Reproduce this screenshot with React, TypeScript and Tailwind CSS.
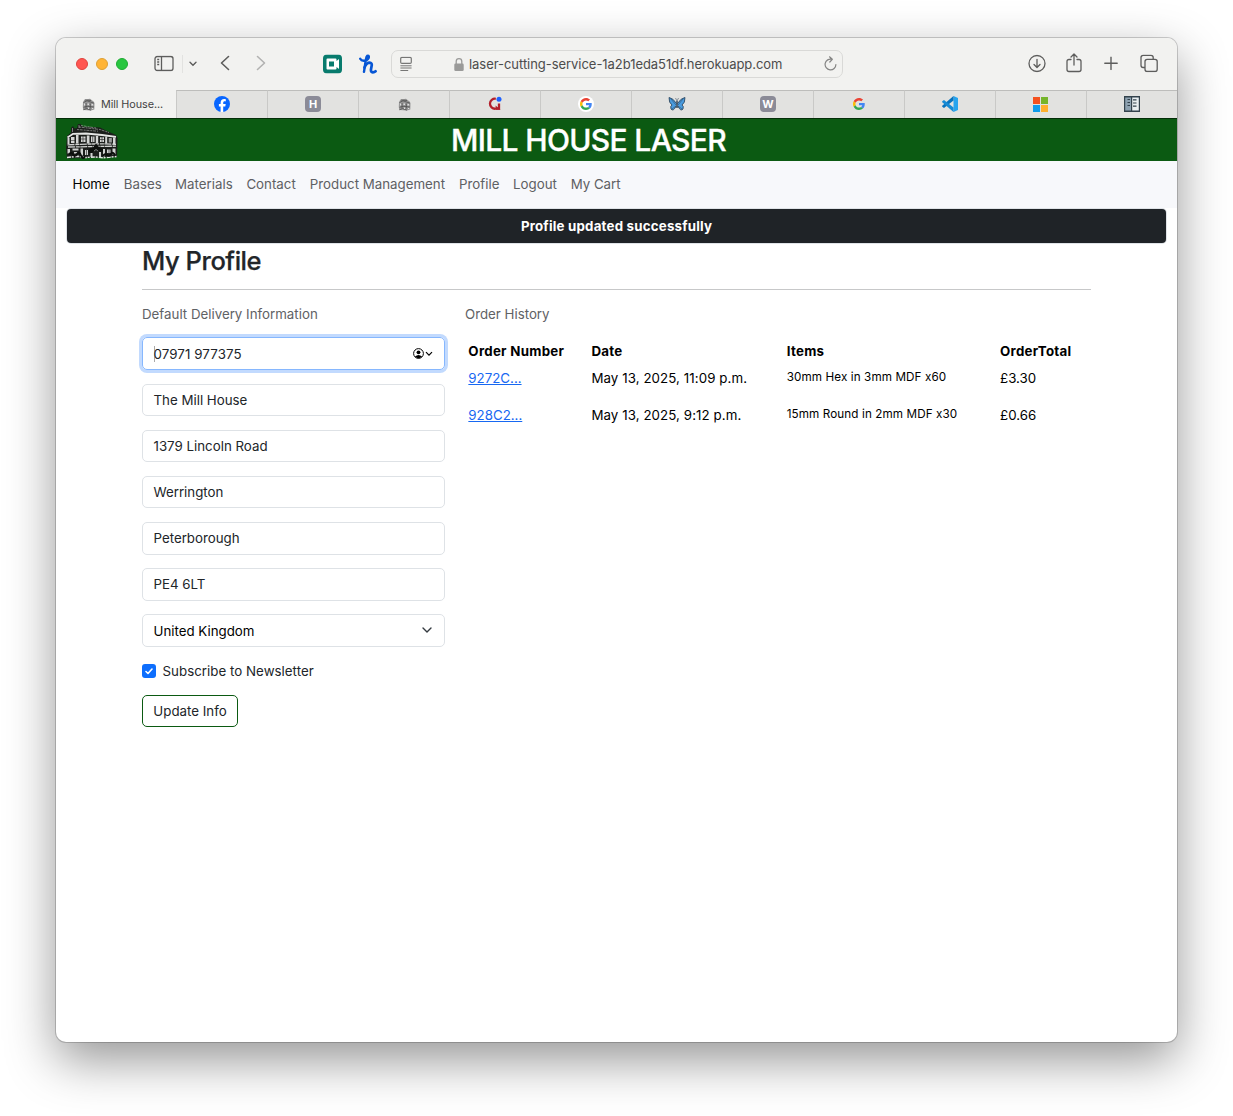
import React from "react";

function House({ className }: { className: string }) {
  const light = "#e4e6e4";
  return (
    <svg viewBox="0 0 52 36" className={className} preserveAspectRatio="none">
      <path d="M1 13 5 9.500 5 5 7 3 8.500 5.500 11 5 12 1 14.500 1 17 3.500 34 4.500 41 8 50 12 51.500 15 51 34 1 35.500 0 25Z" fill="#1b1e1b" />
      <path d="M13 4 34 6.500 43 9.500M11 6.500 32 8.200M15 2.500 30 5" stroke={light} strokeWidth="1" strokeDasharray="2 .7 3 1" opacity=".45" fill="none" />
      <path d="M6.500 5v4M13 2v3" stroke={light} strokeWidth=".8" opacity=".6" />
      <path d="M1.500 14.500 7 10.800 20 10.500 36 12 50 13.800" stroke={light} strokeWidth="1.800" fill="none" />
      <path d="M1.500 21.800 14 21.300 34 20.800 50 21.300M2 24 25 23.600 50 23.200" stroke={light} strokeWidth="1.300" strokeDasharray="7 .8 4 .5" opacity=".9" fill="none" />
      <g fill={light}>
        <path d="M1.500 15h2v6h-2zM5 14h3.500v3H5zM5 17.500h3.500v2.500H5zM10 12h2.500v8.500H10zM15 13.500h4.500v5.500H15zM20.800 12.500h2.700v8h-2.700zM25 13.500h3.500v5.500H25zM29.800 13h2.400v7h-2.400zM34 14.200h4v4.800h-4zM39.200 13.500h2v7h-2zM42.800 15h2.800v4.500h-2.800zM47 14.500h2.500v7H47z" opacity=".92" />
        <path d="M1.500 26h2.500v4.500H1.500zM6.500 25.500h6v2h-6zM8 29h4v1.500H8zM14.500 25.500h2.500v7h-2.500zM19 27h3v5h-3zM24.500 30h2v4h-2zM33 29h2v5h-2zM37 26h2v7.500h-2zM41 26.500h3.500v3.500H41zM46.500 25.500h3v6h-3z" opacity=".9" />
      </g>
      <path d="M17 13v7M15 16h5M36 14v5M33.500 16.500H38M26.700 13v7M44 14v6M20.500 26v6M43 26v5" stroke="#333" strokeWidth=".7" />
      <path d="M22 28 24 25 27 24.500 30 20.500 33 24 37 26 37 28.500 34 28.500 30 25.500 26 30 23 30Z" fill="#0c0f0c" />
      <path d="M28 28 30 26.500 32 28" stroke={light} strokeWidth=".8" fill="none" opacity=".6" />
      <path d="M1 34.500 12 33.300 20 34.500 29 34 38 34.800 50.500 33.500" stroke={light} strokeWidth="1.400" strokeDasharray="4 .8 2 1.200" fill="none" />
      <path d="M3 31.500q2-3 4 0t4-.5 4 1.500 4 .5M37 33q2-3 4-1t4-1 4 1.500" stroke="#0c0f0c" strokeWidth="2" fill="none" />
    </svg>
  );
}

function MiniHouse() {
  return (
    <svg viewBox="0 0 13 13" className="h-[13px] w-[13px]">
      <path d="M1 4 2.500 1.500 8 .8 11.500 3.500 12.500 5 12.300 11.500 9 12.500 1.200 12 .8 9Z" fill="#979797" />
      <path d="M1.500 4.500 5 2.800 12 5.200M3 2 9 2.500M1.500 9.300 5 8.300 12 9M4 5v5M8.300 5.500v5M1.500 11.800l3-1.300 4.500 1.700" stroke="#505050" strokeWidth=".8" fill="none" />
      <path d="M2 5.500h1.200v2H2zM5.500 5.500h1.500v1.500H5.500zM9.500 6h1.500v1.500H9.500zM6 9.500h1v1.500H6zM10 10h1.200v1H10zM3 3.200l2-.4" fill="#dedede" />
    </svg>
  );
}

function GoogleG({ className }: { className: string }) {
  return (
    <svg viewBox="0 0 48 48" className={className}>
      <path fill="#EA4335" d="M24 9.500c3.540 0 6.710 1.220 9.210 3.600l6.850-6.850C35.900 2.380 30.470 0 24 0 14.620 0 6.510 5.380 2.560 13.220l7.980 6.190C12.430 13.720 17.740 9.500 24 9.500z" />
      <path fill="#4285F4" d="M46.980 24.550c0-1.570-.15-3.090-.38-4.550H24v9.020h12.940c-.58 2.960-2.260 5.480-4.780 7.180l7.730 6c4.510-4.180 7.090-10.360 7.090-17.650z" />
      <path fill="#FBBC05" d="M10.530 28.590c-.48-1.450-.76-2.990-.76-4.590s.27-3.140.76-4.590l-7.980-6.190C.92 16.460 0 20.120 0 24s.92 7.540 2.560 10.780l7.970-6.190z" />
      <path fill="#34A853" d="M24 48c6.480 0 11.930-2.130 15.890-5.810l-7.730-6c-2.150 1.450-4.920 2.300-8.160 2.300-6.260 0-11.570-4.220-13.470-9.910l-7.980 6.190C6.510 42.620 14.620 48 24 48z" />
    </svg>
  );
}

function LetterIcon({ children }: { children: string }) {
  return <span className="flex h-4 w-4 items-center justify-center rounded-[4px] bg-[#8b8b97] pt-px text-[11px] leading-none font-bold text-white">{children}</span>;
}

const favicons = [
  <svg viewBox="0 0 16 16" className="h-4 w-4">
    <circle cx="8" cy="8" r="8" fill="#0866ff" />
    <path d="M6.600 15.900V10.500H4.900V8h1.700V6.900c0-2.700 1.200-3.900 3.700-3.900.5 0 1.100.1 1.500.2v2.200c-.2 0-.6-.1-1-.1-1.200 0-1.600.5-1.600 1.600V8h2.500l-.4 2.500H9.200v5.400z" fill="#fff" />
  </svg>,
  <LetterIcon>H</LetterIcon>,
  <MiniHouse />,
  <svg viewBox="0 0 16 16" className="h-4 w-4">
    <path d="M8.800 2.800A5 5 0 1 0 8.500 12.700H12V7.500" fill="none" stroke="#b3202c" strokeWidth="2.300" />
    <path d="M8.500 9.500 13.600 13.800H9z" fill="#b3202c" />
    <circle cx="12" cy="3.300" r="2.500" fill="#1f62ff" />
  </svg>,
  <span className="flex h-4 w-4 items-center justify-center rounded-full bg-white"><GoogleG className="h-3 w-3" /></span>,
  <svg viewBox="0 0 18 16" className="h-4 w-[18px]" stroke="#2b3f52" strokeWidth=".8" fill="#4a9ce0">
    <path d="M8.500 7.500Q5 2 1 1.500 0.800 7 4 9 2 10 3 13 5 16 8.300 10M9.500 7.500Q13 2 17 1.500 17.200 7 14 9 16 10 15 13 13 16 9.700 10" />
    <path d="M9 5v7" strokeWidth="1.400" />
    <path d="M9 5 7.500 2M9 5l1.500-3M3 3l5 6M15 3l-5 6M8 10l-4 3M10 10l4 3" strokeWidth=".5" />
  </svg>,
  <LetterIcon>W</LetterIcon>,
  <GoogleG className="h-3 w-3" />,
  <svg viewBox="0 0 16 16" className="h-4 w-4">
    <path d="M11.500 0 16 2v12l-4.500 2z" fill="#27a4ee" />
    <path d="M11.500 0v4.600L2 12 .2 10.700v-1z" fill="#0873bd" />
    <path d="M11.500 16v-4.600L2 4 .2 5.300v1z" fill="#168bd5" />
  </svg>,
  <span className="mr-px grid h-[15px] w-[15px] grid-cols-2 gap-px">
    <i className="bg-[#f4511e]" /><i className="bg-[#76b52b]" /><i className="bg-[#119bea]" /><i className="bg-[#ffb02e]" />
  </span>,
  <svg viewBox="0 0 16 16" className="h-4 w-4">
    <path d="M0 0h16v16H0z" fill="#33424c" />
    <path d="M1.200 1.500h5.800v13H1.200z" fill="#8da1b0" />
    <path d="M8.200 1.500h6.600v13H8.200z" fill="#e8eef1" />
    <path d="M3.500 3.500h2.500M3.500 6.500h2.500M3.500 9.500h2.500M9 3.800h3.500M9 7h3.500M9 10.200h3.500" stroke="#33424c" strokeWidth="1.200" />
  </svg>,
];

const navItems: [string, string][] = [
  ["Home", "w-[51.300px] text-black"],
  ["Bases", "w-[51.300px]"],
  ["Materials", "w-[71.300px]"],
  ["Contact", "w-[63.400px]"],
  ["Product Management", "w-[149.300px]"],
  ["Profile", "w-[54px]"],
  ["Logout", "w-[57.700px]"],
  ["My Cart", "w-[60px] tracking-[-0.050px]"],
];

function Toolbar() {
  return (
    <div className="flex h-[52px] shrink-0 items-center bg-[#f2f2f0] text-[#5d5d5c]">
      <div className="ml-5 flex gap-2">
        <span className="h-3 w-3 rounded-full border border-[#e0443e] bg-[#ff5651]" />
        <span className="h-3 w-3 rounded-full border border-[#dea034] bg-[#ffb436]" />
        <span className="h-3 w-3 rounded-full border border-[#1eab33] bg-[#28c640]" />
      </div>
      <svg viewBox="0 0 20 16" className="ml-[25.500px] h-4 w-5 -translate-y-[0.500px]" fill="none" stroke="currentColor" strokeWidth="1.300">
        <rect x="1" y="1" width="18" height="14" rx="2.200" />
        <path d="M7.500 1v14M3.200 4h2M3.200 6.500h2M3.200 9h2" />
      </svg>
      <span className="ml-2 h-[18px] w-px bg-[#e2e2e0]" />
      <svg viewBox="0 0 8 6" className="ml-[6.500px] h-[6px] w-2" fill="none" stroke="currentColor" strokeWidth="1.400" strokeLinecap="round"><path d="M1 1.200 4 4.200 7 1.200" /></svg>
      <svg viewBox="0 0 10 16" className="ml-[23px] h-4 w-[10px] -translate-y-[1px]" fill="none" stroke="currentColor" strokeWidth="1.600" strokeLinecap="round" strokeLinejoin="round"><path d="M8.500 1.500 1.500 8l7 6.500" /></svg>
      <svg viewBox="0 0 10 16" className="ml-[26px] h-4 w-[10px] -translate-y-[1px] text-[#b2b2b1]" fill="none" stroke="currentColor" strokeWidth="1.600" strokeLinecap="round" strokeLinejoin="round"><path d="M1.500 1.500 8.500 8 1.500 14.500" /></svg>
      <svg viewBox="0 0 19 19" className="ml-[57px] h-[19px] w-[19px] -translate-y-[0.500px]">
        <rect width="19" height="19" rx="4" fill="#087b6d" />
        <path d="M4.500 4h8q1 0 1 1v1.500l2.500-2v10l-2.500-2V14q0 1-1 1h-8q-1 0-1-1V5q0-1 1-1z" fill="#fff" />
        <path d="M6 7h5v5H6z" fill="#087b6d" />
      </svg>
      <svg viewBox="0 0 18 20" className="ml-[17px] h-5 w-[18px]" fill="none" stroke="#0756d5" strokeLinecap="round" strokeLinejoin="round">
        <path d="M1.200 4.800Q2.500 7.300 6.200 6.600 9.800 5.500 9.900 3 9.600 1.200 8.300 1.800 7.300 2.600 6.800 6L5 17.800" strokeWidth="2.400" />
        <path d="M5.500 13.500Q7.500 8.600 10.600 8.600 13.200 8.800 12.700 11.500L12 15.200Q11.600 18.200 13.800 18.300 15.600 18.200 16.600 17.300" strokeWidth="2.700" />
      </svg>
      <div className="ml-[14px] flex h-7 w-[452px] items-center rounded-[7px] border border-[#d9d9d7] text-[#767675]">
        <svg viewBox="0 0 12 15" className="ml-2 h-[15px] w-3 -translate-y-[0.500px]" fill="none" stroke="currentColor" strokeWidth="1.200" strokeLinecap="round"><rect x=".7" y=".9" width="10.600" height="6" rx="1.200" /><path d="M.8 9.300h10.400M.8 11.500h10.400M.8 14h7" strokeWidth="1" /></svg>
        <svg viewBox="0 0 10 13" className="ml-[41.500px] h-[13px] w-[10px]" fill="none"><rect x=".3" y="5.500" width="9.400" height="7.500" rx="1.300" fill="#9a9a99" /><path d="M2.200 6V3.500a2.800 2.800 0 0 1 5.600 0V6" stroke="#9a9a99" strokeWidth="1.300" /></svg>
        <span className="ml-[5.500px] w-[314px] pt-px text-[13px] tracking-[-0.045px] whitespace-nowrap text-[#4c4c4c]">laser-cutting-service-1a2b1eda51df.herokuapp.com</span>
        <svg viewBox="0 0 13 15" className="ml-[41px] h-[15px] w-[13px] -translate-y-px" fill="none" stroke="#858584" strokeWidth="1.200" strokeLinecap="round" strokeLinejoin="round"><path d="M8 3.300A5.400 5.400 0 1 0 11.900 8.500M5.500.8 8.300 3.300 5.800 6" /></svg>
      </div>
      <div className="ml-[185px] flex h-5 items-center">
        <svg viewBox="0 0 18 18" className="h-[18px] w-[18px] -translate-y-[0.500px]" fill="none" stroke="currentColor" strokeWidth="1.300" strokeLinecap="round" strokeLinejoin="round"><circle cx="9" cy="9" r="8" /><path d="M9 4.800v8M6 10l3 3 3-3" /></svg>
        <svg viewBox="0 0 16 20" className="ml-5 h-5 w-4 -translate-y-px" fill="none" stroke="currentColor" strokeWidth="1.300" strokeLinecap="round" strokeLinejoin="round"><path d="M5 6.500H3Q1 6.500 1 8.500v8q0 2 2 2h10q2 0 2-2v-8q0-2-2-2h-2M8 12V1.200M5 4l3-3 3 3" /></svg>
        <svg viewBox="0 0 14 14" className="ml-[21.500px] h-[14px] w-[14px] -translate-y-[0.700px]" fill="none" stroke="currentColor" strokeWidth="1.400" strokeLinecap="round"><path d="M7 .8v12.400M.8 7h12.400" /></svg>
        <svg viewBox="0 0 18 18" className="ml-[22px] h-[18px] w-[18px] -translate-y-[0.700px]" fill="none" stroke="currentColor" strokeWidth="1.300" strokeLinejoin="round"><rect x="5" y="5" width="12.200" height="12.200" rx="2.200" /><path d="M5 13.200H3.200Q1 13.200 1 11V3.200Q1 1 3.200 1H11q2.200 0 2.200 2.200V5" /></svg>
      </div>
    </div>
  );
}

function TabStrip() {
  return (
    <div className="flex h-7 shrink-0">
      <div className="flex w-[120px] items-center bg-[#f2f2f0] pl-[26px]">
        <MiniHouse />
        <span className="ml-[6px] pt-[2px] text-[10.800px] tracking-[-0.060px] whitespace-nowrap text-[#434343]">Mill House...</span>
      </div>
      {favicons.map((icon, i) => (
        <div key={i} className="flex w-[91px] items-center justify-center border-t border-l border-t-[#bdbdbb] border-l-[#c9c9c7] bg-[#e2e2e0] pb-px">{icon}</div>
      ))}
    </div>
  );
}

const fields = ["The Mill House", "1379 Lincoln Road", "Werrington", "Peterborough", "PE4 6LT"];

const orders = [
  ["9272C...", "May 13, 2025, 11:09 p.m.", "30mm Hex in 3mm MDF x60", "£3.30"],
  ["928C2...", "May 13, 2025, 9:12 p.m.", "15mm Round in 2mm MDF x30", "£0.66"],
];

function DeliveryForm() {
  return (
    <section className="w-[303px]">
      <h2 className="h-5 leading-5 text-[#5f6265]">Default Delivery Information</h2>
      <div className="mt-[13px] flex h-[33px] items-center rounded-[5px] border border-[#86b7fe] pl-[10.500px] shadow-[0_0_0_3px_#c2dafe]">
        <span className="-mr-px h-4 w-px bg-[#aaa]" />
        <span className="pt-[2px] tracking-[0.100px]">07971 977375</span>
        <svg viewBox="0 0 11 11" className="ml-auto h-[11px] w-[11px]"><circle cx="5.500" cy="5.500" r="4.900" fill="none" stroke="#000" /><circle cx="5.500" cy="4.300" r="1.900" /><path d="M2 8.500Q5.500 5.500 9 8.500 5.500 12 2 8.500" /></svg>
        <svg viewBox="0 0 8 6" className="mr-[11px] ml-px h-[6px] w-2" fill="none" stroke="#000" strokeWidth="1.200"><path d="M1 1.200 4 4.200 7 1.200" /></svg>
      </div>
      <div className="mt-[13.500px] flex flex-col gap-[13.300px]">
        {fields.map((f) => (
          <div key={f} className="flex h-[32.800px] items-center rounded-[5px] border border-[#dee2e6] pt-[1.400px] pl-[10.500px]">{f}</div>
        ))}
        <div className="flex h-[33px] items-center justify-between rounded-[5px] border border-[#dee2e6] pr-3 pl-[10.500px] text-black">
          <span className="pt-[2px]">United Kingdom</span>
          <svg viewBox="0 0 10 7" className="h-[7px] w-[10px]" fill="none" stroke="#343a40" strokeWidth="1.400" strokeLinecap="round" strokeLinejoin="round"><path d="m1 1 4 4 4-4" /></svg>
        </div>
      </div>
      <label className="mt-[14.500px] flex h-5 items-center">
        <span className="flex h-[14px] w-[14px] items-center justify-center rounded-[3px] bg-[#0d6efd]">
          <svg viewBox="0 0 8 7" className="h-[7px] w-2" fill="none" stroke="#fff" strokeWidth="1.600" strokeLinecap="round" strokeLinejoin="round"><path d="m1 3.500 2 2L7 1" /></svg>
        </span>
        <span className="ml-[6.500px] pt-px tracking-[0.030px]">Subscribe to Newsletter</span>
      </label>
      <button className="mt-[14px] flex h-8 w-24 items-center justify-center rounded-[5px] border border-[#0b5a12] pt-px">Update Info</button>
    </section>
  );
}

function OrderHistory() {
  return (
    <section className="ml-5 text-black">
      <h2 className="h-5 pl-[0.300px] leading-5 text-[#5f6265]">Order History</h2>
      <table className="mt-[14px] ml-[3.700px] table-fixed border-collapse text-left">
        <thead>
          <tr className="h-[27px] font-bold tracking-[0.280px]">
            <th className="w-[123.300px] p-0">Order Number</th>
            <th className="w-[195.500px] p-0">Date</th>
            <th className="w-[213.500px] p-0">Items</th>
            <th className="w-[91px] p-0">OrderTotal</th>
          </tr>
        </thead>
        <tbody>
          {orders.map((o) => (
            <tr key={o[0]} className="h-[37px] align-top leading-5 whitespace-nowrap">
              <td className="p-0 pt-[3px]"><a className="text-[#1768f2] underline">{o[0]}</a></td>
              <td className="p-0 pt-[3px] tracking-[0.080px]">{o[1]}</td>
              <td className="p-0 pt-[1.500px] text-[11.700px] tracking-[0.090px]">{o[2]}</td>
              <td className="p-0 pt-[3px]">{o[3]}</td>
            </tr>
          ))}
        </tbody>
      </table>
    </section>
  );
}

export default function App() {
  return (
    <div className="h-[1116px] w-[1233px] overflow-hidden bg-white pt-[38px] pl-14 font-['Inter',sans-serif] text-[13.300px] text-[#212529]">
      <div className="flex h-[1004px] w-[1121px] flex-col overflow-hidden rounded-[10px] bg-white shadow-[0_0_0_1px_rgba(0,0,0,0.18),0_18px_50px_rgba(0,0,0,0.42)]">
        <Toolbar />
        <TabStrip />
        <header className="flex h-[43px] shrink-0 items-center border-t border-[#032d07] bg-[#0b5a12] pl-[10px] text-white">
          <House className="mt-[2px] h-9 w-[52px]" />
          <h1 className="ml-[333px] text-[30px] leading-none font-medium tracking-[-0.650px] whitespace-nowrap [-webkit-text-stroke:0.350px_currentColor]">MILL HOUSE LASER</h1>
        </header>
        <nav className="flex h-[47px] shrink-0 items-center bg-[#f7f8fb] pl-[16.500px] whitespace-nowrap text-[#5e6063]">
          {navItems.map(([label, cls]) => <a key={label} className={cls}>{label}</a>)}
        </nav>
        <div className="mx-[11px] mt-px flex h-[34px] shrink-0 items-center justify-center rounded-[4px] bg-[#1f2327] pt-px font-bold tracking-[0.200px] text-white shadow-[0_0_0_1px_#dfe3e7]">Profile updated successfully</div>
        <main className="mx-[86px]">
          <h1 className="h-[47px] border-b border-[#c7c8c9] pt-[2px] text-[25.500px] leading-8 font-medium tracking-[-0.450px] [-webkit-text-stroke:0.250px_currentColor]">My Profile</h1>
          <div className="flex pt-[14px]">
            <DeliveryForm />
            <OrderHistory />
          </div>
        </main>
      </div>
    </div>
  );
}
